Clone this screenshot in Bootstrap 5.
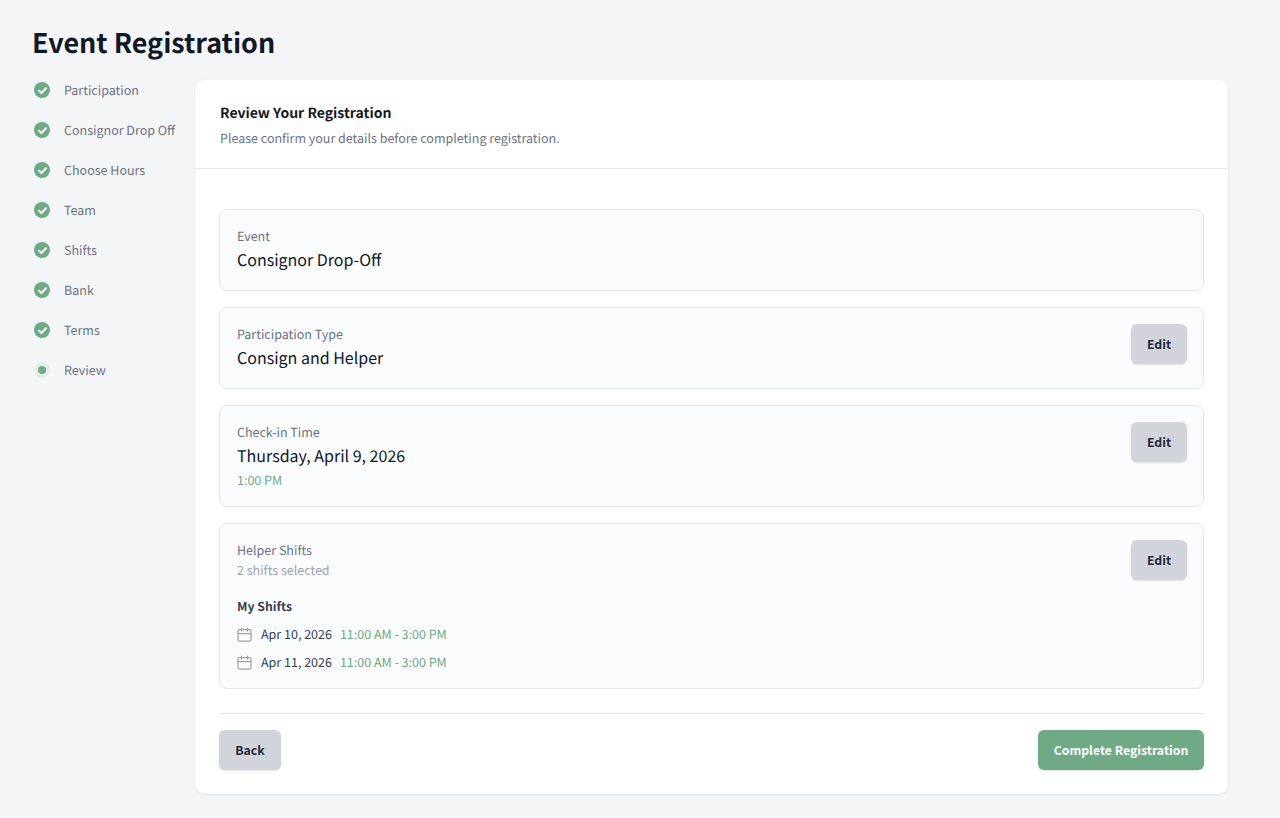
<!DOCTYPE html>
<html lang="en">

<head>
    <meta charset="UTF-8">
    <meta name="viewport" content="width=device-width, initial-scale=1.0">
    <title>Event Registration</title>
    <link href="https://cdn.jsdelivr.net/npm/bootstrap@5.3.0/dist/css/bootstrap.min.css" rel="stylesheet">
    <style>
        body {
            background: #f3f5f7;
            color: #111827;
            font-family: "Noto Sans CJK JP", "Noto Sans", sans-serif;
            font-size: 12.5px;
            line-height: 20px;
            text-rendering: geometricPrecision;
        }

        .page { padding: 24px 52px 24px 32px; }
        .page-title { font-size: 26.9px; line-height: 36px; font-weight: 700; margin-bottom: 20px; color: #111827; }

        .steps { width: 163px; gap: 20px; }
        .step { color: #6b7280; gap: 14px; padding-left: 2px; }
        .step-dot { width: 16px; height: 16px; border-radius: 50%; background: #6fa985; }
        .step-dot.current { background: #e2eee7; }
        .step-dot.current span { width: 8px; height: 8px; border-radius: 50%; background: #6fa985; }

        .main-card { border: 0; border-radius: 10px; box-shadow: 0 1px 3px rgba(0, 0, 0, .08); }
        .main-head { padding: 21px 25px 20px; border-bottom: 1px solid #e5e7eb; }
        .main-head h2 { font-size: 14px; line-height: 24px; font-weight: 600; margin-bottom: 3px; color: #111827; }
        .main-head p { color: #6b7280; margin: 0; }
        .main-body { padding: 40px 24px 24px; }

        .review-item { background: #fafbfc; border: 1px solid #e5e7eb; border-radius: 8px; padding: 16px 16px 16px 17px; margin-bottom: 16px; }
        .review-label { color: #6b7280; }
        .review-value { font-size: 16px; line-height: 26px; margin-bottom: 2px; color: #111827; }
        .green { color: #6fa985; }
        .muted { color: #9ca3af; }
        .shift-title { font-size: 12.25px; font-weight: 600; color: #374151; margin: 16px 0 8px; }
        .shift-row { color: #374151; margin-top: 8px; }
        .shift-row svg { margin-right: 9px; }
        .shift-row .green { margin-left: 8px; }

        .btn-soft, .btn-go { font-size: 12.25px; line-height: 20px; font-weight: 600; height: 40px; padding: 10px 0; border: 0; border-radius: 6px; box-shadow: 0 1px 2px rgba(0, 0, 0, .12); }
        .btn-soft { background: #d1d5db; color: #1f2937; width: 56px; }
        .btn-back { width: 62px; }
        .btn-go { background: #6fa985; color: #fff; width: 166px; }
        .main-foot { border-top: 1px solid #e5e7eb; margin-top: 24px; padding-top: 16px; }
    </style>
</head>

<body>
    <div class="page">
        <h1 class="page-title">Event Registration</h1>
        <div class="d-flex">
            <div class="steps d-flex flex-column flex-shrink-0" id="steps"></div>
            <div class="card main-card flex-grow-1">
                <div class="main-head">
                    <h2>Review Your Registration</h2>
                    <p>Please confirm your details before completing registration.</p>
                </div>
                <div class="main-body">
                    <div class="review-item">
                        <div class="review-label">Event</div>
                        <div class="review-value">Consignor Drop-Off</div>
                    </div>
                    <div class="review-item d-flex justify-content-between align-items-start">
                        <div>
                            <div class="review-label">Participation Type</div>
                            <div class="review-value">Consign and Helper</div>
                        </div>
                        <button class="btn btn-soft">Edit</button>
                    </div>
                    <div class="review-item d-flex justify-content-between align-items-start">
                        <div>
                            <div class="review-label">Check-in Time</div>
                            <div class="review-value">Thursday, April 9, 2026</div>
                            <div class="green">1:00 PM</div>
                        </div>
                        <button class="btn btn-soft">Edit</button>
                    </div>
                    <div class="review-item d-flex justify-content-between align-items-start mb-0">
                        <div>
                            <div class="review-label">Helper Shifts</div>
                            <div class="muted">2 shifts selected</div>
                            <div class="shift-title">My Shifts</div>
                            <div class="shift-row d-flex align-items-center">
                                <svg width="15" height="15" viewBox="0 0 15 15" fill="none" stroke="#9ca3af" stroke-width="1.25" stroke-linecap="round"><rect x="1" y="2.5" width="13" height="11.5" rx="1.5"/><path d="M1 6.5h13M4.5 1v3M10.5 1v3"/></svg>
                                <span>Apr 10, 2026</span><span class="green">11:00 AM - 3:00 PM</span>
                            </div>
                            <div class="shift-row d-flex align-items-center">
                                <svg width="15" height="15" viewBox="0 0 15 15" fill="none" stroke="#9ca3af" stroke-width="1.25" stroke-linecap="round"><rect x="1" y="2.5" width="13" height="11.5" rx="1.5"/><path d="M1 6.5h13M4.5 1v3M10.5 1v3"/></svg>
                                <span>Apr 11, 2026</span><span class="green">11:00 AM - 3:00 PM</span>
                            </div>
                        </div>
                        <button class="btn btn-soft">Edit</button>
                    </div>
                    <div class="main-foot d-flex justify-content-between">
                        <button class="btn btn-soft btn-back">Back</button>
                        <button class="btn btn-go">Complete Registration</button>
                    </div>
                </div>
            </div>
        </div>
    </div>
    <script src="https://cdn.jsdelivr.net/npm/bootstrap@5.3.0/dist/js/bootstrap.bundle.min.js"></script>
    <script>
        // Sidebar steps, all done except the last
        const steps = ['Participation', 'Consignor Drop Off', 'Choose Hours', 'Team', 'Shifts', 'Bank', 'Terms', 'Review'];
        const check = '<svg width="11" height="11" viewBox="0 0 11 11" fill="none" stroke="#fff" stroke-width="2" stroke-linecap="round" stroke-linejoin="round"><path d="M2 5.8l2.4 2.3L9 3.2"/></svg>';
        document.getElementById('steps').innerHTML = steps.map((name, i) => {
            const last = i === steps.length - 1;
            return `<div class="step d-flex align-items-center">
                <div class="step-dot d-flex align-items-center justify-content-center flex-shrink-0 ${last ? 'current' : ''}">${last ? '<span></span>' : check}</div>
                <div>${name}</div>
            </div>`;
        }).join('');
    </script>
</body>

</html>
